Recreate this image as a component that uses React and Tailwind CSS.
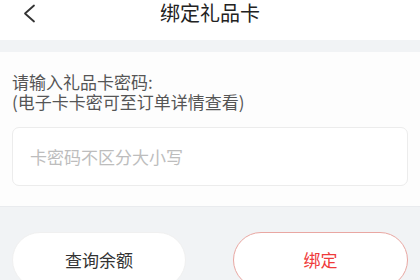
import React from "react";

export default function App() {
  const font = { fontFamily: '"Noto Sans CJK SC", "Noto Sans", sans-serif' };
  return (
    <div className="w-[420px] h-[280px] overflow-hidden bg-[#f1f3f5]" style={font}>
      <div className="relative h-[40px] bg-white flex items-start justify-center">
        <svg className="absolute left-[22px] top-[4px]" width="14" height="19" viewBox="0 0 14 19">
          <path d="M12 1.5 L3 9.5 L12 17.5" fill="none" stroke="#333" strokeWidth="1.8" strokeLinecap="round" strokeLinejoin="round" />
        </svg>
        <div className="text-[20px] leading-[26px] text-[#222] mt-[0px]">绑定礼品卡</div>
      </div>
      <div className="h-[12px]" />
      <div className="bg-[#fdfdfd] h-[155px] px-[12px] pt-[20px] border-b border-[#e9ebee]">
        <div className="text-[17px] leading-[20px] text-[#555]">
          <div>请输入礼品卡密码:</div>
          <div>(电子卡卡密可至订单详情查看)</div>
        </div>
        <div className="mt-[15px] h-[59px] bg-white border border-[#ececec] rounded-[7px] flex items-center pl-[17px] text-[17px] text-[#bdbdbd]">
          卡密码不区分大小写
        </div>
      </div>
      <div className="flex justify-between px-[12px] pt-[25px]">
        <div className="w-[174px] h-[56px] rounded-full bg-white border border-[#f0f0f0] flex items-center justify-center text-[17px] text-[#333]">
          查询余额
        </div>
        <div className="w-[175px] h-[56px] rounded-full bg-white border border-[#e9a7a2] flex items-center justify-center text-[17px] text-[#ef3b3b]">
          绑定
        </div>
      </div>
    </div>
  );
}
